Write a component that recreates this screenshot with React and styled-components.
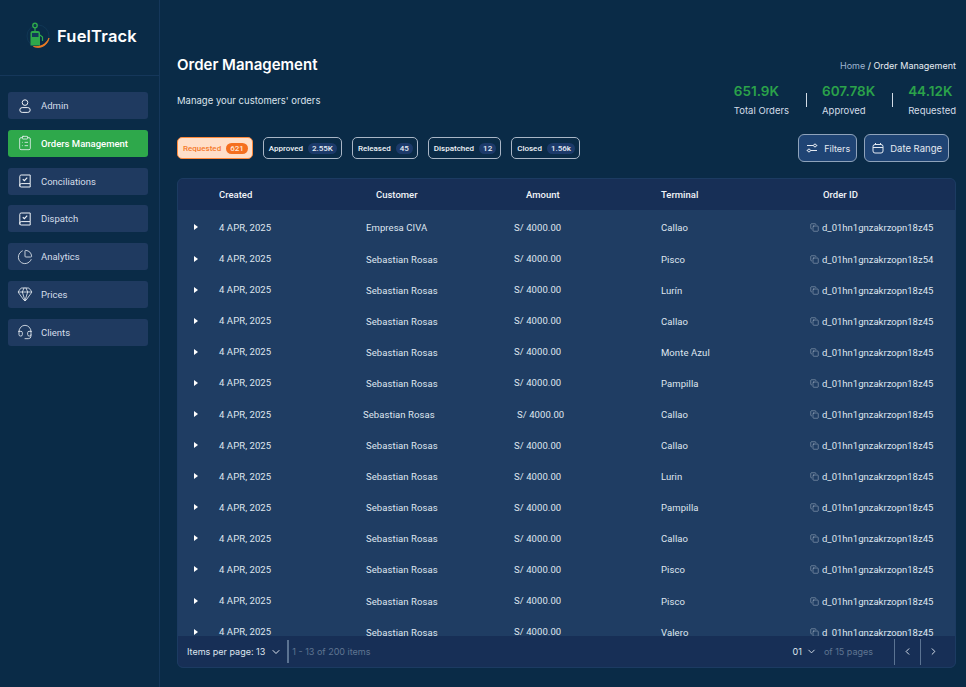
import React from "react";
import styled, { createGlobalStyle } from "styled-components";
import {
  ChartPie,
  ChevronDown,
  ChevronLeft,
  ChevronRight,
  ClipboardList,
  Copy,
  Gem,
  Headset,
} from "lucide-react";

const GlobalStyle = createGlobalStyle`
  html, body {
    margin: 0;
    height: 100%;
    background: #0a2b47;
  }
  * {
    box-sizing: border-box;
  }
`;

const Page = styled.div`
  display: flex;
  width: 966px;
  height: 687px;
  overflow: hidden;
  background: #0a2b47;
  color: #fff;
  font-family: "Inter", "Liberation Sans", sans-serif;
`;

const Sidebar = styled.aside`
  width: 160px;
  flex: none;
  border-right: 1px solid #15375a;
`;

const LogoBar = styled.div`
  height: 76px;
  display: flex;
  align-items: center;
  gap: 3px;
  padding: 0 0 3px 24px;
  border-bottom: 1px solid #15375a;
`;

const LogoText = styled.span`
  font-size: 16.5px;
  font-weight: 600;
  letter-spacing: 0.2px;
`;

const Menu = styled.nav`
  display: flex;
  flex-direction: column;
  gap: 10.8px;
  padding: 16px 11px 0 8px;
`;

const MenuItem = styled.div`
  height: 27px;
  display: flex;
  align-items: center;
  gap: 8px;
  padding-left: 9px;
  border-radius: 3px;
  font-family: "Roboto", "Liberation Sans", sans-serif;
  font-size: 9.5px;
  font-weight: ${(p) => (p.$active ? 500 : 400)};
  color: ${(p) => (p.$active ? "#fff" : "#d5deea")};
  background: ${(p) => (p.$active ? "#2ea84b" : "#1f3a60")};
`;

const Main = styled.main`
  flex: 1;
  min-width: 0;
  display: flex;
  flex-direction: column;
  padding: 55px 10px 19px 17px;
`;

const TopRow = styled.div`
  display: flex;
  justify-content: space-between;
  height: 77px;
`;

const Heading = styled.div`
  display: flex;
  flex-direction: column;
`;

const Title = styled.h1`
  margin: 0;
  font-size: 15px;
  line-height: 20px;
  font-weight: 600;
`;

const Subtitle = styled.p`
  margin: 20px 0 0;
  font-size: 9.5px;
  line-height: 12px;
  color: #dbe3ec;
`;

const Summary = styled.div`
  display: flex;
  flex-direction: column;
  align-items: flex-end;
`;

const Breadcrumb = styled.div`
  margin-top: 5px;
  font-size: 9px;
  line-height: 12px;
  color: #e8edf3;
`;

const Crumb = styled.span`
  color: #9db4d0;
`;

const Stats = styled.div`
  display: flex;
  align-items: center;
  margin-top: 11px;
`;

const Stat = styled.div`
  display: flex;
  flex-direction: column;
  gap: 5px;
`;

const StatValue = styled.span`
  font-size: 13.5px;
  line-height: 17px;
  font-weight: 600;
  color: #2ba24a;
`;

const StatLabel = styled.span`
  font-size: 9.5px;
  line-height: 12px;
  color: #d3dce7;
`;

const StatDivider = styled.span`
  width: 1px;
  height: 14px;
  margin: 0 15px 0 17px;
  background: #d3dce7;
`;

const Toolbar = styled.div`
  display: flex;
  align-items: center;
  justify-content: space-between;
  height: 28px;
  margin-top: 2px;
  padding-right: 7px;
`;

const Chips = styled.div`
  display: flex;
  gap: 10px;
`;

const Chip = styled.div`
  height: 22px;
  display: flex;
  align-items: center;
  gap: 5px;
  padding: 0 4px 0 5px;
  border-radius: 5px;
  font-family: "Roboto", "Liberation Sans", sans-serif;
  font-size: 8px;
  font-weight: 500;
  border: 1px solid ${(p) => (p.$active ? "#ff8a3c" : "#a9b6c6")};
  background: ${(p) => (p.$active ? "#ffdfc9" : "transparent")};
  color: ${(p) => (p.$active ? "#f5792a" : "#f0f3f7")};
`;

const ChipCount = styled.span`
  height: 11px;
  display: flex;
  align-items: center;
  padding: 0 4px;
  border-radius: 6px;
  font-size: 8px;
  background: ${(p) => (p.$active ? "#f56f1f" : "#1c3a6a")};
  color: ${(p) => (p.$active ? "#ffe9da" : "#e7edf5")};
`;

const Buttons = styled.div`
  display: flex;
  gap: 7px;
`;

const ToolButton = styled.div`
  height: 28px;
  display: flex;
  align-items: center;
  gap: 6px;
  padding: 0 6px 0 7px;
  border: 1px solid #8fa3bb;
  border-radius: 6px;
  background: #1f4474;
  font-size: ${(p) => p.$size}px;
  color: #e3e9f1;
`;

const TableCard = styled.section`
  flex: 1;
  min-height: 0;
  margin-top: 16px;
  display: flex;
  flex-direction: column;
  overflow: hidden;
  border: 1px solid #1c3b62;
  border-radius: 6px;
  background: #1f3d63;
`;

const RowGrid = styled.div`
  display: grid;
  grid-template-columns: 41px 147px 148px 147px 149px 1fr;
  align-items: center;
`;

const HeaderRow = styled(RowGrid)`
  height: 31px;
  flex: none;
  background: #172f56;
  font-family: "Roboto", "Liberation Sans", sans-serif;
  font-size: 9.5px;
  font-weight: 500;
  color: #f1f4f8;
`;

const HeaderCell = styled.span`
  padding-left: ${(p) => p.$indent || 0}px;
`;

const Rows = styled.div`
  flex: 1;
  min-height: 0;
  overflow: hidden;
  padding-top: 1px;
`;

const Row = styled(RowGrid)`
  height: 31.1px;
  font-family: "Roboto", "Liberation Sans", sans-serif;
  font-size: 9.5px;
  letter-spacing: 0.08px;
  color: #dfe6ef;

  &:first-child {
    height: 32px;
  }
`;

const Cell = styled.span`
  white-space: nowrap;
  margin-left: ${(p) => p.$shift || 0}px;
  padding-top: ${(p) => (p.$low ? 1 : 0)}px;
`;

const Caret = styled.span`
  justify-self: center;
  margin-right: 5px;
  width: 0;
  height: 0;
  border-left: 4px solid #fff;
  border-top: 3px solid transparent;
  border-bottom: 3px solid transparent;
`;

const OrderCell = styled.span`
  display: flex;
  align-items: center;
  gap: 3px;
  padding-top: 1px;
  letter-spacing: 0;
`;

const Footer = styled.footer`
  height: 31px;
  flex: none;
  display: flex;
  align-items: center;
  padding: 0 9px;
  background: #172f56;
  font-size: 9px;
  color: #dfe6ef;
`;

const PerPage = styled.span`
  display: flex;
  align-items: center;
  gap: 5px;
  margin-right: 5px;
`;

const FootDivider = styled.span`
  width: ${(p) => p.$width || 1}px;
  height: ${(p) => p.$height || 26}px;
  background: #5b7392;
`;

const Muted = styled.span`
  color: #5f7591;
`;

const RangeText = styled(Muted)`
  margin-left: 3px;
`;

const Pager = styled.div`
  margin-left: auto;
  display: flex;
  align-items: center;
`;

const PageSelect = styled.span`
  display: flex;
  align-items: center;
  gap: 4px;
  margin-right: 7px;
`;

const PageCount = styled(Muted)`
  margin-right: 21px;
`;

const PageButton = styled.span`
  width: 25px;
  display: flex;
  justify-content: center;
  color: #e7edf5;
`;

const LogoIcon = () => (
  <svg width="30" height="30" viewBox="0 0 30 30" fill="none">
    <circle cx="14" cy="15" r="11" stroke="#123a58" strokeWidth="0.8" />
    <circle cx="11" cy="4.5" r="2.2" stroke="#2ea84b" strokeWidth="1.4" />
    <path d="M11 7v3" stroke="#2ea84b" strokeWidth="1.2" />
    <path d="M6.5 12a2 2 0 0 1 2-2h5.5a2 2 0 0 1 2 2v12.5H6.5z" fill="#2ea84b" />
    <rect x="8" y="12" width="6.5" height="4" fill="#123a58" />
    <path d="M16 14l2.5 2v4" stroke="#2ea84b" strokeWidth="1.2" />
    <path d="M9.5 25.5c6.5 .8 12.5-1.8 15.5-8.5-.8 6.8-8 11.5-15.5 8.5z" fill="#f07c22" stroke="#f07c22" strokeWidth="0.8" />
  </svg>
);

const UserIcon = () => (
  <svg width="16" height="16" viewBox="0 0 16 16" fill="none" stroke="#eef2f7" strokeWidth="1">
    <circle cx="8" cy="4.6" r="2.8" />
    <rect x="2.8" y="9.6" width="10.4" height="4.8" rx="2.4" />
  </svg>
);

const LedgerIcon = () => (
  <svg width="16" height="16" viewBox="0 0 16 16" fill="none" stroke="#eef2f7" strokeWidth="1">
    <path d="M13.2 10.6V2H4.2a1.4 1.4 0 0 0-1.4 1.4v10.2" />
    <path d="M13.2 10.6H4.2a1.4 1.4 0 0 0-1.4 1.4v.6A1.4 1.4 0 0 0 4.2 14h9v-3.4z" />
    <path d="M5.8 6.2l1.6 1.5 2.8-3" strokeWidth="1.2" />
  </svg>
);

const FilterIcon = () => (
  <svg width="12" height="12" viewBox="0 0 12 12" fill="none" stroke="#e3e9f1" strokeWidth="1">
    <path d="M1 3.5h6.5M10.5 3.5h.8M.7 8.5h.8M4.5 8.5H11" />
    <circle cx="9" cy="3.5" r="1.4" />
    <circle cx="3" cy="8.5" r="1.4" />
  </svg>
);

const CalendarIcon = () => (
  <svg width="12" height="12" viewBox="0 0 12 12" fill="none" stroke="#e3e9f1" strokeWidth="1">
    <rect x="1" y="2.5" width="10" height="8.5" rx="2" />
    <path d="M1 5.5h10M3.5 1v2M8.5 1v2" />
  </svg>
);

const LucideIcon = ({ as: Icon }) => <Icon size={16} strokeWidth={1.2} color="#eef2f7" />;

const menu = [
  { label: "Admin", Icon: UserIcon },
  { label: "Orders Management", Icon: ClipboardList, lucide: true, active: true },
  { label: "Conciliations", Icon: LedgerIcon },
  { label: "Dispatch", Icon: LedgerIcon },
  { label: "Analytics", Icon: ChartPie, lucide: true },
  { label: "Prices", Icon: Gem, lucide: true },
  { label: "Clients", Icon: Headset, lucide: true },
];

const chips = [
  { label: "Requested", count: "621", active: true },
  { label: "Approved", count: "2.55K" },
  { label: "Released", count: "45" },
  { label: "Dispatched", count: "12" },
  { label: "Closed", count: "1.56k" },
];

const stats = [
  { value: "651.9K", label: "Total Orders" },
  { value: "607.78K", label: "Approved" },
  { value: "44.12K", label: "Requested" },
];

const ORDER_ID = "d_01hn1gnzakrzopn18z45";

const orders = [
  { customer: "Empresa CIVA", terminal: "Callao" },
  { terminal: "Pisco", id: "d_01hn1gnzakrzopn18z54" },
  { terminal: "Lurín" },
  { terminal: "Callao" },
  { terminal: "Monte Azul" },
  { terminal: "Pampilla" },
  { terminal: "Callao", customerShift: -3, amountShift: 3 },
  { terminal: "Callao" },
  { terminal: "Lurin" },
  { terminal: "Pampilla" },
  { terminal: "Callao" },
  { terminal: "Pisco" },
  { terminal: "Pisco" },
  { terminal: "Valero" },
];

export default function App() {
  return (
    <Page>
      <GlobalStyle />
      <Sidebar>
        <LogoBar>
          <LogoIcon />
          <LogoText>FuelTrack</LogoText>
        </LogoBar>
        <Menu>
          {menu.map(({ label, Icon, lucide, active }) => (
            <MenuItem key={label} $active={active}>
              {lucide ? <LucideIcon as={Icon} /> : <Icon />}
              {label}
            </MenuItem>
          ))}
        </Menu>
      </Sidebar>
      <Main>
        <TopRow>
          <Heading>
            <Title>Order Management</Title>
            <Subtitle>Manage your customers' orders</Subtitle>
          </Heading>
          <Summary>
            <Breadcrumb>
              <Crumb>Home</Crumb> / Order Management
            </Breadcrumb>
            <Stats>
              {stats.map((s, i) => (
                <React.Fragment key={s.label}>
                  {i > 0 && <StatDivider />}
                  <Stat>
                    <StatValue>{s.value}</StatValue>
                    <StatLabel>{s.label}</StatLabel>
                  </Stat>
                </React.Fragment>
              ))}
            </Stats>
          </Summary>
        </TopRow>
        <Toolbar>
          <Chips>
            {chips.map((c) => (
              <Chip key={c.label} $active={c.active}>
                {c.label}
                <ChipCount $active={c.active}>{c.count}</ChipCount>
              </Chip>
            ))}
          </Chips>
          <Buttons>
            <ToolButton $size={9}>
              <FilterIcon />
              Filters
            </ToolButton>
            <ToolButton $size={9.5}>
              <CalendarIcon />
              Date Range
            </ToolButton>
          </Buttons>
        </Toolbar>
        <TableCard>
          <HeaderRow>
            <span />
            <HeaderCell>Created</HeaderCell>
            <HeaderCell $indent={10}>Customer</HeaderCell>
            <HeaderCell $indent={12}>Amount</HeaderCell>
            <HeaderCell>Terminal</HeaderCell>
            <HeaderCell $indent={13}>Order ID</HeaderCell>
          </HeaderRow>
          <Rows>
            {orders.map((o, i) => (
              <Row key={i}>
                <Caret />
                <Cell>4 APR, 2025</Cell>
                <Cell $shift={o.customerShift} $low={i > 0}>
                  {o.customer || "Sebastian Rosas"}
                </Cell>
                <Cell $shift={o.amountShift}>S/ 4000.00</Cell>
                <Cell $low>{o.terminal}</Cell>
                <OrderCell>
                  <Copy size={9} strokeWidth={1} />
                  {o.id || ORDER_ID}
                </OrderCell>
              </Row>
            ))}
          </Rows>
          <Footer>
            <PerPage>
              Items per page: 13
              <ChevronDown size={12} />
            </PerPage>
            <FootDivider $width={2} $height={23} />
            <RangeText>1 - 13 of 200 items</RangeText>
            <Pager>
              <PageSelect>
                01
                <ChevronDown size={11} />
              </PageSelect>
              <PageCount>of 15 pages</PageCount>
              <FootDivider />
              <PageButton>
                <ChevronLeft size={11} />
              </PageButton>
              <FootDivider />
              <PageButton>
                <ChevronRight size={11} />
              </PageButton>
            </Pager>
          </Footer>
        </TableCard>
      </Main>
    </Page>
  );
}
